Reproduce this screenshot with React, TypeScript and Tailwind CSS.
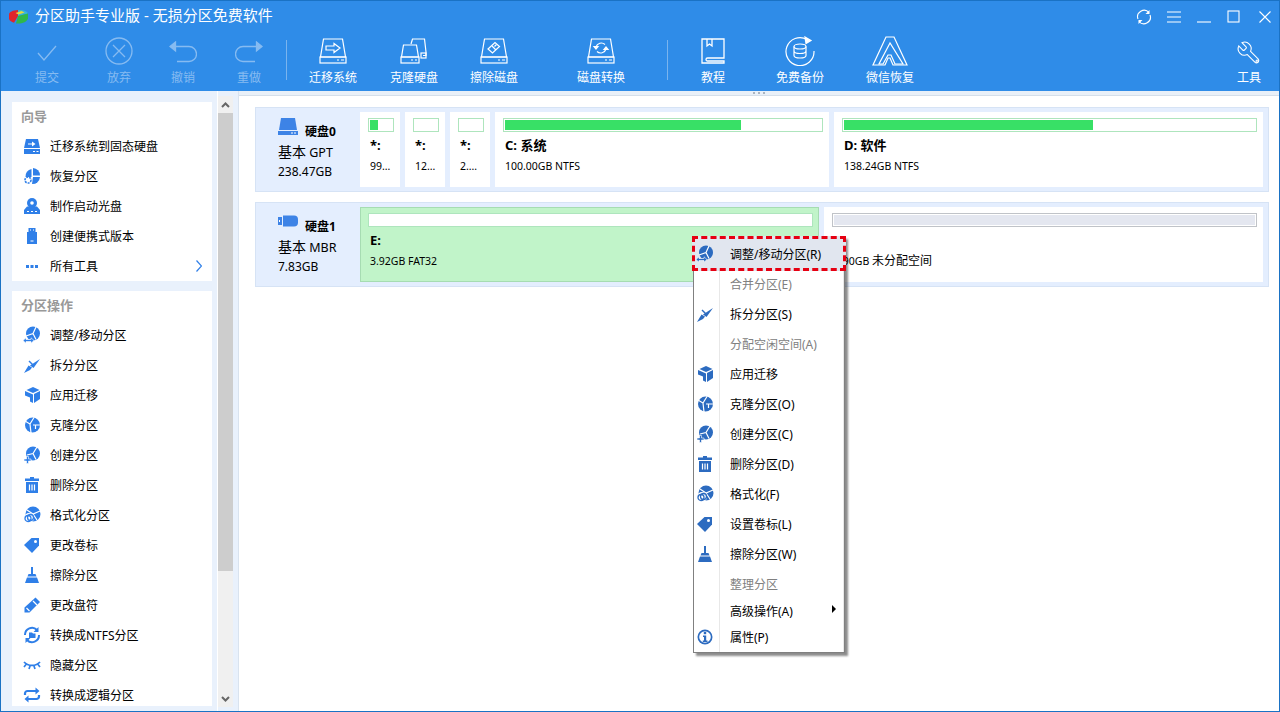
import type { ReactNode } from "react";

// ---- small blue glyphs used by the side list and the context menu ----
const cut = { stroke: "#fff", strokeWidth: 1.2, fill: "none" };

const glyphs: Record<string, ReactNode> = {
  hdd: (
    <>
      <path d="M3 2h12l2 9H1z" />
      <rect x="1" y="12" width="16" height="5" />
      <path d="M5 6.500h4V4.500l3.500 2.500L9 9.500V7.500H5z" fill="#fff" />
      <path d="M10 14.500h2M13.500 14.500h2" {...cut} />
    </>
  ),
  recover: (
    <>
      <path d="M10 1a7.500 7.500 0 0 1 7 7.500h-7z" />
      <path d="M8.500 2a7.500 7.500 0 0 0-6 8h6z" />
      <path d="M10 10h7a7.500 7.500 0 0 1-8 7z" />
      <circle cx="5" cy="13" r="3" fill="none" stroke="currentColor" strokeWidth="1.600" strokeDasharray="2 1" />
    </>
  ),
  cd: (
    <>
      <circle cx="9" cy="6" r="5" />
      <circle cx="9" cy="6" r="1.800" fill="#fff" />
      <path d="M4 9.500h10l3 3.500v4H1v-4z" />
      <path d="M4 14.500h2M8 14.500h2M12 14.500h2" {...cut} />
    </>
  ),
  usb: (
    <>
      <rect x="5.500" y="1" width="7" height="4" />
      <rect x="4" y="5" width="10" height="12" />
      <path d="M7 3h1M10 3h1M7.500 14h3" {...cut} />
    </>
  ),
  dots: <path d="M3 8h3v3H3zM7.500 8h3v3h-3zM12 8h3v3h-3z" />,
  resize: (
    <>
      <circle cx="10" cy="7.500" r="7" />
      <path d="M3 10l7-2.500 3-6.500M10 7.500l3 6" {...cut} />
      <path d="M0 14.500l3-2.700v1.700h5v-1.700l3 2.700-3 2.700v-1.700H3v1.700z" stroke="#fff" strokeWidth=".6" />
    </>
  ),
  split: (
    <>
      <path d="M1 17l4.500-7.500 3.500 2L7 14z" />
      <path d="M7 9.500L17 3l-6.500 9z" />
      <path d="M6 5l3.500 3.500" stroke="currentColor" strokeWidth="1.400" fill="none" />
    </>
  ),
  cube: (
    <>
      <path d="M10 1l6.500 3-6.500 3-6.500-3z" />
      <path d="M11 8l6-3v8l-6 4z" />
      <path d="M2 5l8 3.500V17l-3-1.500v-4l-5-2z" />
    </>
  ),
  clone: (
    <>
      <circle cx="9.500" cy="9" r="7.500" />
      <path d="M2 5l5 3 1 9M7 8l4-6.500M10 9h7M12.500 9v4" {...cut} />
    </>
  ),
  create: (
    <>
      <circle cx="10" cy="7.500" r="7" />
      <path d="M4 9l6-1.500L14 1M10 7.500l3 6" {...cut} />
      <path d="M3.500 10.500h2v2.500H8v2H5.500v2.500h-2V15H1v-2h2.500z" stroke="#fff" strokeWidth=".6" />
    </>
  ),
  trash: (
    <>
      <path d="M7 1h4v1.500h5V5H2V2.500h5z" />
      <rect x="3" y="6" width="12" height="11" />
      <path d="M6.500 8.500v6M9 8.500v6M11.500 8.500v6" {...cut} />
    </>
  ),
  format: (
    <>
      <circle cx="10" cy="8" r="7.500" />
      <path d="M4 4l6 4 7-3M10 8l4 6" {...cut} />
      <circle cx="6" cy="12" r="5" fill="#fff" />
      <circle cx="5" cy="12.500" r="3" fill="none" stroke="currentColor" strokeWidth="1.300" />
      <circle cx="7.500" cy="11.500" r="3" fill="none" stroke="currentColor" strokeWidth="1.300" />
    </>
  ),
  tag: (
    <>
      <path d="M1 9l7.500-7H16v7.500L9 17z" />
      <circle cx="12.500" cy="5.500" r="1.500" fill="#fff" />
    </>
  ),
  broom: (
    <>
      <rect x="8" y="1" width="2" height="7" />
      <path d="M5.500 8h7l1 2.500h-9z" />
      <path d="M4 11.500h10l2 5.500H2z" />
    </>
  ),
  pencil: (
    <>
      <path d="M12.500 1.500l4.500 4.500L6.500 16.500H1.500v-5z" />
      <path d="M10 5l4 4M3.500 12l3 3" {...cut} />
    </>
  ),
  ntfs: (
    <>
      <path d="M2 9a7 7 0 0 1 12-5" fill="none" stroke="currentColor" strokeWidth="2" />
      <path d="M16 9a7 7 0 0 1-12 5" fill="none" stroke="currentColor" strokeWidth="2" />
      <path d="M15.500 1v5h-5zM2.500 17v-5h5z" />
      <path d="M6 6.500h3l1 1h2.500V12H6z" />
    </>
  ),
  eye: (
    <path
      d="M1 6c4 4.500 12 4.500 16 0M3 8.500L1 11M7 10l-1 3M11 10l1 3M15 8.500l2 2.500"
      fill="none"
      stroke="currentColor"
      strokeWidth="1.700"
    />
  ),
  repeat: (
    <>
      <path d="M2 9V7.500A2.500 2.500 0 0 1 4.500 5H13M16 9v1.500a2.500 2.500 0 0 1-2.500 2.500H5" fill="none" stroke="currentColor" strokeWidth="2.200" />
      <path d="M12.500 1.500l4 3.500-4 3.500zM5.500 9.500l-4 3.500 4 3.500z" />
    </>
  ),
  info: (
    <>
      <circle cx="9" cy="9" r="7.500" />
      <circle cx="9" cy="9" r="5.800" fill="#fff" />
      <rect x="7.800" y="3.800" width="2.400" height="2.400" />
      <path d="M7 7.500h3.200v5H11.500v1.500H6.800v-1.500h1.200V9H7z" />
    </>
  ),
};

function Glyph({ name }: { name: string }) {
  return (
    <svg viewBox="0 0 18 18" fill="currentColor" className="w-[18px] h-[18px] shrink-0">
      {glyphs[name]}
    </svg>
  );
}

// ---- outlined toolbar pictures ----
function Hdd({ children }: { children?: ReactNode }) {
  return (
    <svg viewBox="0 0 28 26" fill="none" stroke="currentColor" strokeWidth="1.200" className="w-[28px] h-[26px]">
      <path d="M4.500 1h19l3 18h-25z" />
      <rect x="1" y="19" width="26" height="6" />
      <path d="M18 22h2M22 22h3" />
      {children}
    </svg>
  );
}

const toolbarPics: Record<string, ReactNode> = {
  check: (
    <svg viewBox="0 0 20 16" fill="none" stroke="currentColor" strokeWidth="1.300" className="w-[20px] h-[16px] mt-[3px]">
      <path d="M1 8l6 7L19 1" />
    </svg>
  ),
  cancel: (
    <svg viewBox="0 0 28 28" fill="none" stroke="currentColor" strokeWidth="1.300" className="w-[28px] h-[28px]">
      <circle cx="14" cy="14" r="13" />
      <path d="M8 8l12 12M20 8L8 20" />
    </svg>
  ),
  undo: (
    <svg viewBox="0 0 28 24" fill="none" stroke="currentColor" strokeWidth="1.300" className="w-[28px] h-[24px] mt-[3px]">
      <path d="M5 5.500h15a6.500 6.500 0 0 1 0 15H8" />
      <path d="M1 5.500L6.500 1v9z" fill="currentColor" />
    </svg>
  ),
  redo: (
    <svg viewBox="0 0 28 24" fill="none" stroke="currentColor" strokeWidth="1.300" className="w-[28px] h-[24px] mt-[3px]">
      <path d="M23 5.500H8a6.500 6.500 0 0 0 0 15h12" />
      <path d="M27 5.500L21.500 1v9z" fill="currentColor" />
    </svg>
  ),
  migrate: (
    <Hdd>
      <path d="M7 8h8V5.500L21 10l-6 4.500V12H7z" />
    </Hdd>
  ),
  clone: (
    <svg viewBox="0 0 28 26" fill="none" stroke="currentColor" strokeWidth="1.200" className="w-[28px] h-[26px]">
      <path d="M11 6l1.500-5h12l1.500 13v3.500h-3" />
      <path d="M3.500 7h13l2 12h-17z" />
      <rect x="1" y="19" width="18" height="6" />
      <rect x="21" y="15" width="5" height="5" />
      <path d="M11 22h2M15 22h2" />
    </svg>
  ),
  wipe: (
    <Hdd>
      <path d="M8 11l7-6.500 4.500 4-7 6.500z" />
      <path d="M12 8l4 4M16.500 6.500l-2 2" />
    </Hdd>
  ),
  convert: (
    <Hdd>
      <path d="M9 9a5.500 5.500 0 0 1 9-2.500M19 11a5.500 5.500 0 0 1-9 2.500" />
      <path d="M7 8.500h4l-2 2.500zM17 11.500h4l-2-2.500z" fill="currentColor" />
    </Hdd>
  ),
  book: (
    <svg viewBox="0 0 24 26" fill="none" stroke="currentColor" strokeWidth="1.300" className="w-[24px] h-[26px]">
      <path d="M23 20V1H1v24h22v-2H6.500a1.500 1.500 0 0 1 0-3z" />
      <path d="M6 1v7l2.500-2L11 8V1" />
    </svg>
  ),
  backup: (
    <svg viewBox="0 0 30 30" fill="none" stroke="currentColor" strokeWidth="1.200" className="w-[30px] h-[30px]">
      <path d="M22 3.500A14 14 0 1 0 29 15" />
      <path d="M20 1l6 3.500-5 3z" fill="currentColor" />
      <ellipse cx="15" cy="10.500" rx="6" ry="2.500" />
      <path d="M9 10.500v9c0 1.400 2.700 2.500 6 2.500s6-1.100 6-2.500v-9M9 15c0 1.400 2.700 2.500 6 2.500s6-1.100 6-2.500" />
    </svg>
  ),
  recovery: (
    <svg viewBox="0 0 36 30" fill="none" stroke="currentColor" strokeWidth="1.200" className="w-[36px] h-[30px]">
      <path d="M14 1h8l13 28H21l-3-7h-2l-3 7H1z" />
      <path d="M18 7L7 28h4l5-9h3l4 9h8z" />
    </svg>
  ),
  tools: (
    <svg viewBox="0 0 24 24" fill="none" stroke="currentColor" strokeWidth="1" className="w-[26px] h-[26px] mt-[3px]">
      <g transform="matrix(-1 0 0 1 24 0)">
        <path d="M14.700 6.300a1 1 0 0 0 0 1.400l1.600 1.600a1 1 0 0 0 1.400 0l3.770-3.770a6 6 0 0 1-7.940 7.940l-6.910 6.910a2.120 2.120 0 0 1-3-3l6.910-6.910a6 6 0 0 1 7.940-7.940l-3.760 3.760z" />
      </g>
      <circle cx="19.500" cy="19.500" r="1" />
    </svg>
  ),
};

const toolbar = [
  { pic: "check", label: "提交", off: true, cls: "ml-[16px]" },
  { pic: "cancel", label: "放弃", off: true, cls: "ml-[12px]" },
  { pic: "undo", label: "撤销", off: true, cls: "ml-[4px]" },
  { pic: "redo", label: "重做", off: true, cls: "ml-[6px]" },
  { sep: true, cls: "ml-[7px]" },
  { pic: "migrate", label: "迁移系统", cls: "ml-[16px]" },
  { pic: "clone", label: "克隆硬盘", cls: "ml-[21px]" },
  { pic: "wipe", label: "擦除磁盘", cls: "ml-[20px]" },
  { pic: "convert", label: "磁盘转换", cls: "ml-[47px]" },
  { sep: true, cls: "ml-[36px]" },
  { pic: "book", label: "教程", cls: "ml-[15px]" },
  { pic: "backup", label: "免费备份", cls: "ml-[27px]" },
  { pic: "recovery", label: "微信恢复", cls: "ml-[30px]" },
  { pic: "tools", label: "工具", cls: "ml-auto" },
];

const wizard = [
  ["hdd", "迁移系统到固态硬盘"],
  ["recover", "恢复分区"],
  ["cd", "制作启动光盘"],
  ["usb", "创建便携式版本"],
  ["dots", "所有工具"],
];

const operations = [
  ["resize", "调整/移动分区"],
  ["split", "拆分分区"],
  ["cube", "应用迁移"],
  ["clone", "克隆分区"],
  ["create", "创建分区"],
  ["trash", "删除分区"],
  ["format", "格式化分区"],
  ["tag", "更改卷标"],
  ["broom", "擦除分区"],
  ["pencil", "更改盘符"],
  ["ntfs", "转换成NTFS分区"],
  ["eye", "隐藏分区"],
  ["repeat", "转换成逻辑分区"],
];

const menu = [
  { icon: "resize", text: "调整/移动分区(R)", h: "h-[30px]" },
  { text: "合并分区(E)", off: true, h: "h-[30px]" },
  { icon: "split", text: "拆分分区(S)", h: "h-[30px]" },
  { text: "分配空闲空间(A)", off: true, h: "h-[30px]" },
  { icon: "cube", text: "应用迁移", h: "h-[30px]" },
  { icon: "clone", text: "克隆分区(O)", h: "h-[30px]" },
  { icon: "create", text: "创建分区(C)", h: "h-[30px]" },
  { icon: "trash", text: "删除分区(D)", h: "h-[30px]" },
  { icon: "format", text: "格式化(F)", h: "h-[30px]" },
  { icon: "tag", text: "设置卷标(L)", h: "h-[30px]" },
  { icon: "broom", text: "擦除分区(W)", h: "h-[30px]" },
  { text: "整理分区", off: true, h: "h-[30px]" },
  { text: "高级操作(A)", more: true, h: "h-[24px]" },
  { icon: "info", text: "属性(P)", h: "h-[28px]" },
];

function SideRow({ icon, text, more }: { icon: string; text: string; more?: boolean }) {
  return (
    <div className="flex items-center h-[30px] pl-[11px] pr-[10px] text-[#2f7fe8]">
      <Glyph name={icon} />
      <span className="ml-[9px] mt-[2px] text-[12px] text-black">{text}</span>
      {more && (
        <svg viewBox="0 0 6 12" fill="none" stroke="currentColor" strokeWidth="1.200" className="w-[6px] h-[12px] ml-auto">
          <path d="M.5.500L5.500 6 .5 11.500" />
        </svg>
      )}
    </div>
  );
}

function Bar({ fill, grey }: { fill?: string; grey?: boolean }) {
  return (
    <div className={`h-[14px] border p-px ${grey ? "border-[#c0c3c8] bg-white" : "border-[#aee5bd] bg-white"}`}>
      <div className={`h-full ${fill ?? ""} ${grey ? "bg-[#e4e7f0]" : "bg-[#38e066]"}`} />
    </div>
  );
}

function Part({ w, fill, name, size, green, grey }: { w: string; fill?: string; name?: ReactNode; size: ReactNode; green?: boolean; grey?: boolean }) {
  return (
    <div className={`${w} shrink-0 ${green ? "bg-[#c1f4c9] border border-[#a6dcb2] pl-[7px] pr-[5px] pt-[5px]" : "bg-white pl-[8px] pr-[6px] pt-[6px]"}`}>
      <Bar fill={fill} grey={grey} />
      <div className="h-[16px] mt-[5px] pl-[2px] text-[13px] leading-[16px] font-bold whitespace-nowrap">{name}</div>
      <div className="h-[16px] mt-[5px] pl-[2px] text-[10.500px] leading-[16px] whitespace-nowrap">{size}</div>
    </div>
  );
}

function DiskInfo({ icon, title, kind, size }: { icon: ReactNode; title: string; kind: string; size: string }) {
  return (
    <div className="w-[104px] shrink-0 pl-[22px] pt-[6px]">
      <div className="flex items-center h-[18px]">
        {icon}
        <span className="ml-[7px] mt-[9px] text-[12px] font-bold">{title}</span>
      </div>
      <div className="h-[19px] mt-[6px] leading-[19px] text-[12.500px] whitespace-nowrap">
        <span className="text-[14px]">基本</span> {kind}
      </div>
      <div className="h-[19px] mt-[1px] leading-[19px] text-[12px]">{size}</div>
    </div>
  );
}

export default function App() {
  return (
    <div className="relative w-[1280px] h-[712px] overflow-hidden border border-[#1a72c4] bg-white text-black font-['Noto_Sans','Noto_Sans_CJK_SC',sans-serif]">
      {/* title bar + toolbar */}
      <header className="h-[90px] bg-[#2f8ce8] text-white">
        <div className="flex items-center h-[30px] pl-[7px]">
          <svg viewBox="0 0 21 17" className="w-[21px] h-[17px]">
            <path d="M10 2C5 2.200 1 4 1 6.500v4c0 2 2.500 3.500 5 4.200L10 8z" fill="#e0242a" />
            <path d="M10 2c5-.5 9 1 10 3.500L10 8z" fill="#38b6d8" />
            <path d="M10 8l10-2.500v5c-1 3.500-6 5.500-12 5z" fill="#2fb84a" />
            <path d="M7.500 5l6-2 3 1.500-6 2z" fill="#e8d83a" />
          </svg>
          <span className="ml-[6px] mb-[2px] text-[15px] leading-[20px]">分区助手专业版 - 无损分区免费软件</span>
          <div className="ml-auto flex items-center pr-[8px] mt-[1px]">
            <svg viewBox="0 0 16 16" fill="none" stroke="currentColor" strokeWidth="1.100" className="w-[16px] h-[16px]">
              <path d="M2 10A6.500 6.500 0 0 1 13 3.500M14 6a6.500 6.500 0 0 1-11 6.500" />
              <path d="M13.500 1v4h-4zM2.500 15v-4h4z" fill="currentColor" stroke="none" />
            </svg>
            <svg viewBox="0 0 14 12" fill="none" stroke="currentColor" strokeWidth="1.100" className="w-[14px] h-[12px] ml-[15px]">
              <path d="M0 1h14M0 6h14M0 11h14" />
            </svg>
            <svg viewBox="0 0 14 12" fill="none" stroke="currentColor" strokeWidth="1.100" className="w-[14px] h-[12px] ml-[16px]">
              <path d="M0 11h14" />
            </svg>
            <svg viewBox="0 0 13 13" fill="none" stroke="currentColor" strokeWidth="1.100" className="w-[13px] h-[13px] ml-[16px]">
              <rect x="1" y="1" width="11" height="11" />
            </svg>
            <svg viewBox="0 0 12 12" fill="none" stroke="currentColor" strokeWidth="1.100" className="w-[12px] h-[12px] ml-[19px]">
              <path d="M.5.500l11 11M11.500.500l-11 11" />
            </svg>
          </div>
        </div>
        <div className="flex h-[60px] pt-[4px]">
          {toolbar.map((t, i) =>
            t.sep ? (
              <div key={i} className={`w-px h-[40px] mt-[5px] shrink-0 bg-[#7ab4ee] ${t.cls}`} />
            ) : (
              <div key={i} className={`w-[60px] shrink-0 flex flex-col items-center ${t.cls} ${t.off ? "text-[#86bbf1]" : "text-white"}`}>
                <div className="h-[32px] flex items-center justify-center">{toolbarPics[t.pic as string]}</div>
                <span className="text-[12px] leading-[16px] mt-[3px]">{t.label}</span>
              </div>
            )
          )}
        </div>
      </header>

      <div className="flex h-[620px]">
        {/* side list */}
        <aside className="w-[232px] shrink-0 flex bg-[#e9f1fc] pl-[11px]">
          <div className="w-[200px] shrink-0 pt-[11px]">
            <section className="bg-white h-[179px]">
              <h3 className="h-[29px] pl-[9px] pt-[4px] text-[13px] leading-[20px] font-bold text-[#999]">向导</h3>
              {wizard.map(([icon, text], i) => (
                <SideRow key={text} icon={icon} text={text} more={i === 4} />
              ))}
            </section>
            <section className="bg-white mt-[10px] h-[415px] overflow-hidden">
              <h3 className="h-[29px] pl-[9px] pt-[4px] text-[13px] leading-[20px] font-bold text-[#999]">分区操作</h3>
              {operations.map(([icon, text]) => (
                <SideRow key={text} icon={icon} text={text} />
              ))}
            </section>
          </div>
          <div className="ml-[5px] w-[1px] bg-white" />
          <div className="w-[15px] mt-[5px] mb-[4px] flex flex-col bg-[#f0f0f0] text-[#666]">
            <div className="h-[17px] flex items-center justify-center">
              <svg viewBox="0 0 9 6" fill="none" stroke="currentColor" strokeWidth="2" className="w-[9px] h-[6px]">
                <path d="M1 5l3.500-3.500L8 5" />
              </svg>
            </div>
            <div className="h-[458px] bg-[#cdcdcd]" />
            <div className="mt-auto h-[17px] flex items-center justify-center">
              <svg viewBox="0 0 9 6" fill="none" stroke="currentColor" strokeWidth="2" className="w-[9px] h-[6px]">
                <path d="M1 1l3.500 3.500L8 1" />
              </svg>
            </div>
          </div>
        </aside>

        <div className="w-[5px] shrink-0 bg-[#e9f1fc] border-r border-[#d9e3ef] box-content" />

        {/* disk area */}
        <main className="flex-1 min-w-0">
          <div className="h-[5px] bg-[#e9f0f8] border-b border-[#d5dfea] flex items-center justify-center gap-[3px]">
            <span className="w-[2px] h-[2px] bg-[#aab4c0]" />
            <span className="w-[2px] h-[2px] bg-[#aab4c0]" />
            <span className="w-[2px] h-[2px] bg-[#aab4c0]" />
          </div>
          <div className="pl-[16px] pr-[10px] pt-[11px]">
            <div className="flex h-[85px] gap-[5px] border border-[#d6e3f5] bg-[#e4eefe] py-[4px] pr-[4px]">
              <div className="-mr-[5px]">
                <DiskInfo
                  title="硬盘0"
                  kind="GPT"
                  size="238.47GB"
                  icon={
                    <svg viewBox="0 0 20 18" fill="#3d83e6" className="w-[20px] h-[18px]">
                      <path d="M3 0h14l2 12H1z" />
                      <path d="M0 13h20v4H0z" />
                      <path d="M13 15h2M16 15h2" stroke="#fff" />
                    </svg>
                  }
                />
              </div>
              <Part w="w-[40px]" fill="w-[8px]" name="*:" size="99…" />
              <Part w="w-[40px]" fill="w-0" name="*:" size="12…" />
              <Part w="w-[40px]" fill="w-0" name="*:" size="2.…" />
              <Part w="w-[334px]" fill="w-[236px]" name="C: 系统" size="100.00GB NTFS" />
              <Part w="w-[429px]" fill="w-[249px]" name="D: 软件" size="138.24GB NTFS" />
            </div>
            <div className="flex h-[85px] mt-[10px] gap-[5px] border border-[#d6e3f5] bg-[#e4eefe] py-[4px] pr-[4px]">
              <div className="-mr-[5px]">
                <DiskInfo
                  title="硬盘1"
                  kind="MBR"
                  size="7.83GB"
                  icon={
                    <svg viewBox="0 0 20 18" fill="#3d83e6" className="w-[20px] h-[18px]">
                      <path d="M0 4h4v8H0z" />
                      <path d="M5 2.500h11a4 4 0 0 1 4 4v3a4 4 0 0 1-4 4H5z" />
                      <path d="M1.500 7v2" stroke="#fff" />
                    </svg>
                  }
                />
              </div>
              <Part w="w-[459px]" fill="w-0" name="E:" size="3.92GB FAT32" green />
              <Part
                w="w-[439px]"
                fill="w-full"
                size={
                  <>
                    3.90GB <span className="text-[12px]">未分配空间</span>
                  </>
                }
                grey
              />
            </div>
          </div>
        </main>
      </div>

      {/* right-click menu */}
      <div className="absolute left-[692px] top-[235px] w-[152px] border border-[#808080] bg-white pt-[2px] pb-[1px] shadow-[3px_3px_2px_rgba(0,0,0,0.45)]">
        <div className="absolute left-[25px] top-0 bottom-0 w-px bg-[#e8e8e8]" />
        <div className="absolute right-0 top-0 bottom-0 w-px bg-[#e8e8e8]" />
        {menu.map((m, i) => (
          <div key={m.text} className={`relative flex items-center ${m.h} text-[#2c6bc0]`}>
            {i === 0 && (
              <div className="absolute -left-[2px] -right-[2px] -top-[3px] -bottom-[2px] bg-[#e1e6ef] border-[3px] border-dashed border-[#e60012]" />
            )}
            <div className="relative w-[36px] shrink-0 pl-[2px]">{m.icon && <Glyph name={m.icon} />}</div>
            <span className={`relative mt-[2px] text-[12px] ${m.off ? "text-[#808080]" : "text-black"}`}>{m.text}</span>
            {m.more && <span className="absolute left-[138px] top-[6px] w-0 h-0 border-y-[4px] border-y-transparent border-l-[4px] border-l-black" />}
          </div>
        ))}
      </div>
    </div>
  );
}
